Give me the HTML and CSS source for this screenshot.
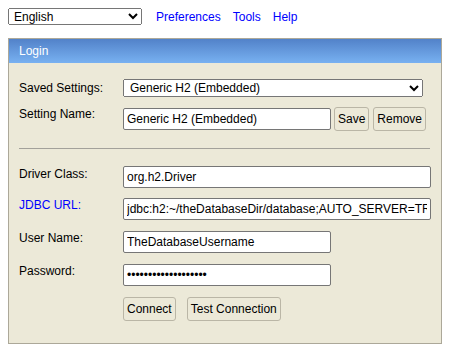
FILE: index.html
```html
<!DOCTYPE html>
<html>
<head>
<meta charset="utf-8">
<link rel="stylesheet" href="styles.css">
</head>
<body>
<div class="topbar">
  <select class="lang"><option>English</option></select>
  <nav class="links">
    <a href="#">Preferences</a>
    <a href="#">Tools</a>
    <a href="#">Help</a>
  </nav>
</div>
<div class="panel">
  <div class="panel-head">Login</div>
  <div class="panel-body">
    <div class="row row-select">
      <div class="label">Saved Settings:</div>
      <select class="saved"><option>Generic H2 (Embedded)</option></select>
    </div>
    <div class="row row-name">
      <div class="label">Setting Name:</div>
      <div class="field">
        <input class="text short" type="text" value="Generic H2 (Embedded)">
        <button class="btn">Save</button>
        <button class="btn">Remove</button>
      </div>
    </div>
    <div class="sep"></div>
    <div class="row row-driver">
      <div class="label">Driver Class:</div>
      <input class="text long" type="text" value="org.h2.Driver">
    </div>
    <div class="row row-url">
      <div class="label"><a href="#" class="url-link">JDBC URL:</a></div>
      <input class="text long" type="text" value="jdbc:h2:~/theDatabaseDir/database;AUTO_SERVER=TRUE">
    </div>
    <div class="row row-user">
      <div class="label">User Name:</div>
      <input class="text short" type="text" value="TheDatabaseUsername">
    </div>
    <div class="row row-pass">
      <div class="label">Password:</div>
      <input class="text short" type="password" value="abcdefghijklmnopqrs">
    </div>
    <div class="row row-actions">
      <div class="label"></div>
      <div class="field actions">
        <button class="btn">Connect</button>
        <button class="btn">Test Connection</button>
      </div>
    </div>
  </div>
</div>
</body>
</html>
```

FILE: styles.css
```css
html, body {
  background: #ffffff;
}
body {
  margin: 8px;
  font-family: "Liberation Sans", Arial, sans-serif;
  font-size: 12px;
  color: #000;
}
.topbar {
  display: flex;
  align-items: center;
  height: 17px;
}
.lang {
  width: 134px;
  height: 17px;
  font-family: "Liberation Sans", Arial, sans-serif;
  font-size: 12px;
  padding: 0 0 0 1px;
  box-sizing: border-box;
}
.links {
  display: flex;
  gap: 12px;
  margin-left: 14px;
}
.links a, .url-link {
  color: #0000ff;
  text-decoration: none;
  font-size: 12px;
}
.panel {
  margin-top: 13px;
  width: 434px;
  box-sizing: border-box;
  border: 1px solid #aca899;
  background: #ece9d8;
}
.panel-head {
  height: 24px;
  line-height: 24px;
  padding-left: 10px;
  color: #ffffff;
  background: linear-gradient(to bottom, #5282c9, #78b1f1);
}
.panel-body {
  display: flex;
  flex-direction: column;
  padding: 16px 10px 22px 10px;
}
.row {
  display: flex;
  align-items: flex-start;
}
.label {
  width: 104px;
  flex: none;
  line-height: 14px;
  color: #000;
}
.row-select .label { padding-top: 2px; }
.row-driver .label { padding-top: 1px; }
.row-name { margin-top: 10px; }
.row-driver { margin-top: 17px; }
.row-url { margin-top: 10px; }
.row-user { margin-top: 11px; }
.row-pass { margin-top: 11px; }
.row-actions { margin-top: 11px; }
.field {
  display: flex;
  align-items: center;
}
.saved {
  width: 300px;
  height: 18px;
  box-sizing: border-box;
  font-family: "Liberation Sans", Arial, sans-serif;
  font-size: 12px;
  padding: 0 0 0 2px;
}
.text {
  height: 22px;
  box-sizing: border-box;
  border: 1px solid #767676;
  border-radius: 2px;
  padding: 0 3px;
  margin: 0;
  font-family: "Liberation Sans", Arial, sans-serif;
  font-size: 12px;
  color: #000;
  background: #fff;
}
.short { width: 208px; }
.long { width: 308px; }
.btn {
  height: 24px;
  box-sizing: border-box;
  margin: 0;
  padding: 0 3px;
  border: 1px solid #bab6a6;
  border-radius: 3px;
  background: #ece9d8;
  font-family: "Liberation Sans", Arial, sans-serif;
  font-size: 12px;
  color: #000;
}
.row-name .field .text { margin-right: 3px; }
.row-name .field .btn + .btn { margin-left: 4px; }
.actions { gap: 11px; }
.sep {
  margin-top: 17px;
  height: 0;
  border-top: 1px solid #a3a19a;
  width: 411px;
}
```
